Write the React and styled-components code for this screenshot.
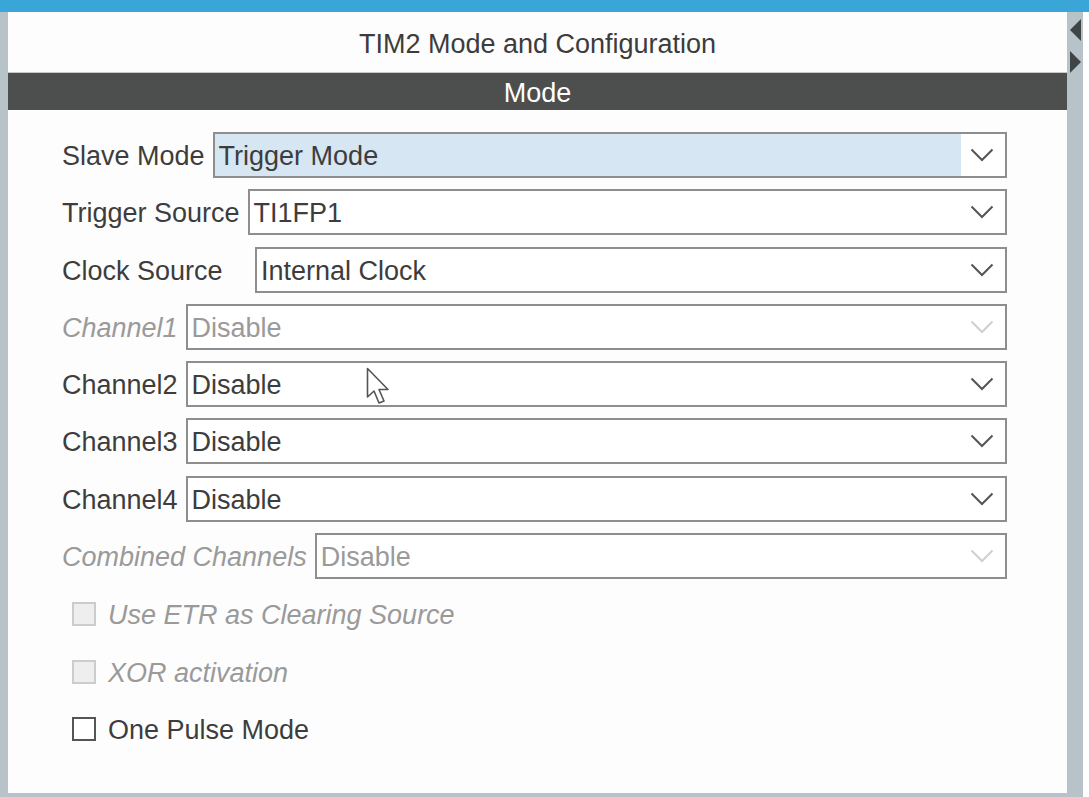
import React from 'react';
import styled, { createGlobalStyle } from 'styled-components';

const GlobalStyle = createGlobalStyle`
  html, body {
    margin: 0;
    padding: 0;
    background: #ffffff;
  }
  body {
    font-family: "Liberation Sans", Arial, sans-serif;
  }
`;

const rows = [
  { label: 'Slave Mode', value: 'Trigger Mode', highlight: true },
  { label: 'Trigger Source', value: 'TI1FP1' },
  { label: 'Clock Source', value: 'Internal Clock', labelWidth: 185 },
  { label: 'Channel1', value: 'Disable', disabled: true },
  { label: 'Channel2', value: 'Disable' },
  { label: 'Channel3', value: 'Disable' },
  { label: 'Channel4', value: 'Disable' },
  { label: 'Combined Channels', value: 'Disable', disabled: true },
];

const checks = [
  { label: 'Use ETR as Clearing Source', disabled: true },
  { label: 'XOR activation', disabled: true },
  { label: 'One Pulse Mode' },
];

const Chevron = ({ disabled }) => (
  <svg width="24" height="14" viewBox="0 0 24 14">
    <polyline
      points="1.5,1.5 12,12 22.5,1.5"
      fill="none"
      stroke={disabled ? '#cfcfcf' : '#555'}
      strokeWidth="2"
    />
  </svg>
);

const Cursor = () => (
  <svg width="28" height="40" viewBox="0 0 28 40">
    <path
      d="M1.5 1.5 L1.5 30 L8 24 L13 36 L18 34 L13 22.5 L22 22.5 Z"
      fill="#fff"
      stroke="#555"
      strokeWidth="1.6"
      strokeLinejoin="round"
    />
  </svg>
);

const App = () => {
  return (
    <>
      <GlobalStyle />
      <Page>
        <TopBar />
        <Body>
          <LeftStrip />
          <Panel>
            <Title>TIM2 Mode and Configuration</Title>
            <SectionBar>Mode</SectionBar>
            <Form>
              {rows.map((r) => (
                <Row key={r.label}>
                  <Label disabled={r.disabled} width={r.labelWidth}>
                    {r.label}
                  </Label>
                  <Select>
                    <Value highlight={r.highlight} disabled={r.disabled}>
                      {r.value}
                    </Value>
                    <Arrow>
                      <Chevron disabled={r.disabled} />
                    </Arrow>
                  </Select>
                </Row>
              ))}
              <Checks>
                {checks.map((c) => (
                  <CheckRow key={c.label}>
                    <Box disabled={c.disabled} />
                    <CheckLabel disabled={c.disabled}>{c.label}</CheckLabel>
                  </CheckRow>
                ))}
              </Checks>
            </Form>
            <Pointer>
              <Cursor />
            </Pointer>
          </Panel>
          <RightStrip>
            <Tri dir="left" />
            <Tri dir="right" />
          </RightStrip>
          <Gutter />
        </Body>
      </Page>
    </>
  );
};

const Page = styled.div`
  width: 1089px;
  height: 797px;
  display: flex;
  flex-direction: column;
  overflow: hidden;
  background: #fff;
`;

const TopBar = styled.div`
  height: 12px;
  background: #3aa5d7;
  box-shadow: 0 1px 1px rgba(0, 0, 0, 0.15);
  flex-shrink: 0;
`;

const Body = styled.div`
  flex: 1;
  display: flex;
  min-height: 0;
`;

const LeftStrip = styled.div`
  width: 8px;
  background: #b7c3c9;
  flex-shrink: 0;
`;

const Panel = styled.div`
  position: relative;
  flex: 1;
  display: flex;
  flex-direction: column;
  background: #fdfdfd;
  border-bottom: 4px solid #b7c3c9;
`;

const Title = styled.div`
  height: 61px;
  display: flex;
  align-items: center;
  justify-content: center;
  font-size: 27px;
  color: #3c3c3c;
  border-bottom: 1px solid #c9c9c9;
  padding-top: 4px;
  box-sizing: border-box;
`;

const SectionBar = styled.div`
  height: 37px;
  display: flex;
  align-items: center;
  justify-content: center;
  background: #4d4f4f;
  color: #ffffff;
  font-size: 27px;
  padding-top: 3px;
  box-sizing: border-box;
`;

const Form = styled.div`
  display: flex;
  flex-direction: column;
  gap: 11.3px;
  padding: 22px 60px 0 54px;
`;

const Row = styled.div`
  display: flex;
  align-items: center;
  height: 46px;
  gap: 8px;
`;

const Label = styled.div`
  font-size: 27px;
  white-space: nowrap;
  padding-top: 3px;
  color: ${(p) => (p.disabled ? '#9a9a9a' : '#3d3d3d')};
  font-style: ${(p) => (p.disabled ? 'italic' : 'normal')};
  width: ${(p) => (p.width ? `${p.width}px` : 'auto')};
  flex-shrink: 0;
`;

const Select = styled.div`
  flex: 1;
  height: 100%;
  display: flex;
  border: 2px solid #8e8e8e;
  box-sizing: border-box;
  background: #fff;
`;

const Value = styled.div`
  flex: 1;
  display: flex;
  align-items: center;
  padding: 3px 0 0 4px;
  font-size: 27px;
  color: ${(p) => (p.disabled ? '#9a9a9a' : '#3d3d3d')};
  background: ${(p) => (p.highlight ? '#d6e6f2' : 'transparent')};
`;

const Arrow = styled.div`
  width: 42px;
  display: flex;
  align-items: center;
  justify-content: center;
  padding-right: 2px;
`;

const Checks = styled.div`
  display: flex;
  flex-direction: column;
  gap: 33.5px;
  padding: 12px 0 0 10px;
`;

const CheckRow = styled.div`
  display: flex;
  align-items: center;
  gap: 12px;
  height: 24px;
`;

const Box = styled.div`
  width: 24px;
  height: 24px;
  box-sizing: border-box;
  border: 2px solid ${(p) => (p.disabled ? '#cccccc' : '#555555')};
  background: ${(p) => (p.disabled ? '#eeeeee' : '#ffffff')};
`;

const CheckLabel = styled.div`
  font-size: 27px;
  padding-top: 3px;
  color: ${(p) => (p.disabled ? '#9a9a9a' : '#3d3d3d')};
  font-style: ${(p) => (p.disabled ? 'italic' : 'normal')};
`;

const Pointer = styled.div`
  position: absolute;
  left: 358px;
  top: 355px;
  pointer-events: none;
`;

const RightStrip = styled.div`
  width: 16px;
  background: #b7c3c9;
  display: flex;
  flex-direction: column;
  align-items: center;
  padding-top: 7px;
  gap: 10px;
  flex-shrink: 0;
`;

const Tri = styled.div`
  width: 0;
  height: 0;
  border-top: 11px solid transparent;
  border-bottom: 11px solid transparent;
  ${(p) =>
    p.dir === 'left'
      ? 'border-right: 11px solid #3f4446;'
      : 'border-left: 11px solid #3f4446;'}
`;

const Gutter = styled.div`
  width: 6px;
  background: #fff;
  flex-shrink: 0;
`;

export default App;
